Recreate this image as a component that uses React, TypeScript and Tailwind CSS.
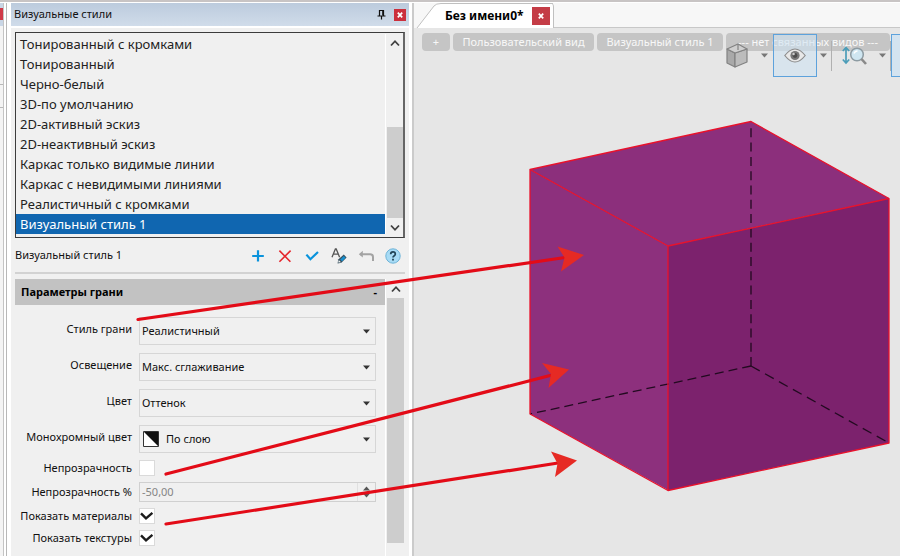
import { useState } from "react"
import type { ReactNode } from "react"

const STYLES = [
  "Тонированный с кромками",
  "Тонированный",
  "Черно-белый",
  "3D-по умолчанию",
  "2D-активный эскиз",
  "2D-неактивный эскиз",
  "Каркас только видимые линии",
  "Каркас с невидимыми линиями",
  "Реалистичный с кромками",
  "Визуальный стиль 1",
]

function Chevron({ down = false }: { down?: boolean }) {
  return (
    <svg width="10" height="8" viewBox="0 0 10 8" fill="none" stroke="#404040" strokeWidth="1.8">
      <path d={down ? "M1 1.5 5 5.8 9 1.5" : "M1 6.5 5 2.2 9 6.5"} />
    </svg>
  )
}

function Caret({ color = "#333" }: { color?: string }) {
  return (
    <svg width="7" height="5" viewBox="0 0 7 5">
      <path d="M0 .5h7L3.5 4.5z" fill={color} />
    </svg>
  )
}

function CloseMark() {
  return (
    <svg width="6" height="6" viewBox="0 0 6 6" stroke="#fff" strokeWidth="1.7">
      <path d="M.8.6 5.2 5.4M5.2.6.8 5.4" />
    </svg>
  )
}

function Row({ id, label, children }: { id: string; label: string; children: ReactNode }) {
  return (
    <div className="flex items-center gap-[7px]">
      <label htmlFor={id} className="w-[117px] shrink-0 text-right leading-4 whitespace-nowrap">
        {label}
      </label>
      {children}
    </div>
  )
}

function SelectRow({ id, label, value, swatch }: { id: string; label: string; value: string; swatch?: boolean }) {
  return (
    <div className="flex gap-[7px]">
      <label htmlFor={id} className="w-[117px] shrink-0 pt-1 text-right leading-4 whitespace-nowrap">
        {label}
      </label>
      <div className="relative flex-1">
        <select
          id={id}
          className={`h-7 w-full appearance-none border border-[#d6d6d6] bg-[#f0f0f0] pr-5 outline-none ${swatch ? "pl-[26px]" : "pl-0.5"}`}
        >
          <option>{value}</option>
        </select>
        {swatch && (
          <svg className="pointer-events-none absolute top-1.5 left-1" width="16" height="16" viewBox="0 0 16 16">
            <path d="M.5.5h15v15H.5z" fill="#fff" stroke="#333" />
            <path d="M1 1h14v14z" fill="#111" />
          </svg>
        )}
        <span className="pointer-events-none absolute inset-y-0 right-1.5 flex items-center">
          <Caret />
        </span>
      </div>
    </div>
  )
}

function CheckRow({ id, label, checked = false }: { id: string; label: string; checked?: boolean }) {
  return (
    <Row id={id} label={label}>
      <span className="relative flex h-4 w-4">
        <input
          id={id}
          type="checkbox"
          defaultChecked={checked}
          className="peer h-4 w-4 appearance-none border border-[#dadada] bg-white"
        />
        <svg
          className="pointer-events-none invisible absolute inset-0 peer-checked:visible"
          width="16"
          height="16"
          viewBox="0 0 16 16"
          fill="none"
          stroke="#1c1c1c"
          strokeWidth="2.4"
        >
          <path d="M2 5.4 7 10.4 13.4 4.8" />
        </svg>
      </span>
    </Row>
  )
}

function StyleList() {
  const [selected, setSelected] = useState(STYLES.length - 1)
  return (
    <div className="flex border border-r-2 border-[#3c3c3c] border-r-[#666] bg-[#f0f0f0] pt-px pb-[3px]">
      <div role="listbox" aria-label="Визуальные стили" className="flex flex-1 flex-col text-[13px]">
        {STYLES.map((name, i) => (
          <button
            key={name}
            role="option"
            aria-selected={i === selected}
            onClick={() => setSelected(i)}
            className={`h-5 pl-1 text-left leading-5 ${i === selected ? "bg-[#1066b0] text-white" : "text-[#222]"}`}
          >
            {name}
          </button>
        ))}
      </div>
      <div className="flex w-[18px] flex-col items-center border-l border-white">
        <button aria-label="Вверх" className="flex h-[18px] w-full items-center justify-center">
          <Chevron />
        </button>
        <div className="flex-1" />
        <div className="h-[91px] w-4 bg-[#cdcdcd]" />
        <button aria-label="Вниз" className="flex h-4 w-full items-end justify-center pb-0.5">
          <Chevron down />
        </button>
      </div>
    </div>
  )
}

function StyleTools() {
  return (
    <div className="flex h-9 items-center justify-between border-b-2 border-[#d2d2d2] pt-px pr-1 text-[11px]">
      <span>Визуальный стиль 1</span>
      <div className="flex items-center gap-[11px]">
        <button aria-label="Добавить">
          <svg width="16" height="16" viewBox="0 0 16 16" stroke="#0a93dc" strokeWidth="2.2">
            <path d="M8 2.2v11.4M2.2 8h11.6" />
          </svg>
        </button>
        <button aria-label="Удалить">
          <svg width="16" height="16" viewBox="0 0 16 16" stroke="#e5262c" strokeWidth="1.6">
            <path d="m2.4 2.6 11 11.2M13.6 2.6 2.4 13.8" />
          </svg>
        </button>
        <button aria-label="Применить">
          <svg width="16" height="16" viewBox="0 0 16 16" fill="none" stroke="#0a93dc" strokeWidth="2.2">
            <path d="m2.4 6.6 4 4.6L14 4" />
          </svg>
        </button>
        <button aria-label="Переименовать">
          <svg width="16" height="16" viewBox="0 0 16 16" fill="none">
            <path d="M1 9.2 4.4 1h.8l3.4 8.2M2.3 6.2h5" stroke="#555" strokeWidth="1.3" />
            <path d="m6.6 15.4.6-3.8 5.6-5 2.8 2.8-5.2 5.4z" fill="#36505f" />
            <path d="m9.2 11.4 3.6-3.4 1.8 1.8-3.5 3.4z" fill="#1590d2" />
            <path d="m7.2 14.6.6-2.6 2.2 2.2z" fill="#f4f4f4" />
          </svg>
        </button>
        <button aria-label="Отменить">
          <svg width="16" height="16" viewBox="0 0 16 16" fill="none" stroke="#a3a3a3" strokeWidth="2">
            <path d="M2 6.2h10.2q2.8 0 2.8 2.8v4" />
            <path d="M4.8 2.8.8 6.2l4 3.2z" fill="#a3a3a3" stroke="none" />
          </svg>
        </button>
        <button aria-label="Справка">
          <svg width="16" height="16" viewBox="0 0 16 16">
            <circle cx="8" cy="8" r="7.2" fill="#a7dbf5" stroke="#6fb4d8" />
            <path d="M5.7 6.3q0-2.4 2.3-2.4t2.3 2.1q0 1.3-1.3 2-1 .6-1 1.6" fill="none" stroke="#224456" strokeWidth="1.7" />
            <path d="M7.1 10.8h1.8v1.8H7.1z" fill="#224456" />
          </svg>
        </button>
      </div>
    </div>
  )
}

function FaceParams() {
  return (
    <div className="flex flex-1">
      <section className="flex-1">
        <h2 className="flex h-[26px] items-center justify-between bg-[#c2c2c2] pr-2 pl-1.5 text-[11px] font-bold text-black">
          Параметры грани
          <button aria-label="Свернуть">-</button>
        </h2>
        <div className="flex flex-col gap-2 pt-3 pr-[9px] text-[11px]">
          <SelectRow id="face-style" label="Стиль грани" value="Реалистичный" />
          <SelectRow id="light" label="Освещение" value="Макс. сглаживание" />
          <SelectRow id="color" label="Цвет" value="Оттенок" />
          <SelectRow id="mono" label="Монохромный цвет" value="По слою" swatch />
        </div>
        <div className="flex flex-col gap-1.5 pt-[7px] pr-[9px] text-[11px]">
          <CheckRow id="opacity" label="Непрозрачность" />
          <Row id="opacity-value" label="Непрозрачность %">
            <div className="flex h-5 flex-1 border border-[#d0d0d0]">
              <input id="opacity-value" defaultValue="-50,00" className="w-full min-w-0 flex-1 bg-transparent pl-0.5 text-[#858585]" />
              <div className="flex w-[18px] flex-col items-center justify-center gap-0.5 border-l border-[#e0e0e0]">
                <button aria-label="Больше">
                  <svg className="block" width="7" height="5" viewBox="0 0 7 5"><path d="M0 4.5h7L3.5.5z" fill="#555" /></svg>
                </button>
                <button aria-label="Меньше">
                  <svg className="block" width="7" height="5" viewBox="0 0 7 5"><path d="M0 .5h7L3.5 4.5z" fill="#555" /></svg>
                </button>
              </div>
            </div>
          </Row>
          <CheckRow id="materials" label="Показать материалы" checked />
          <CheckRow id="textures" label="Показать текстуры" checked />
        </div>
      </section>
      <div className="flex w-5 flex-col items-center border-l border-white pb-[13px]">
        <button aria-label="Вверх" className="flex h-[19px] items-center justify-center">
          <Chevron />
        </button>
        <div className="w-[17px] flex-1 bg-[#cdcdcd]" />
      </div>
    </div>
  )
}

function StylesPanel() {
  return (
    <aside className="flex w-[46%] shrink-0">
      <div className="flex w-[11px] shrink-0">
        <div className="w-1 border-r border-[#c4c4c4] bg-[#f4f4f4]">
          <div className="h-[23px] bg-[#c9d6e6] pt-[5px]">
            <div className="h-3 bg-[#cf3a48]" />
          </div>
          <div className="mt-[58px] h-6 border-y border-[#b8b8b8]" />
        </div>
        <div className="ml-0.5 flex-1 border-l border-[#b8b8b8] bg-white" />
      </div>
      <div className="flex flex-1 flex-col">
        <div className="flex h-[23px] items-center bg-linear-to-b from-[#bccbdd] to-[#d0dcea] pr-[3px] pl-[3px]">
          <h1 className="flex-1 text-[11px]">Визуальные стили</h1>
          <button aria-label="Закрепить" className="mr-2">
            <svg width="9" height="11" viewBox="0 0 9 11" fill="none" stroke="#111">
              <path d="M2.5 6.5v-5h4v5M.5 7h8M4.5 7v3.5" strokeWidth="1.2" />
              <path d="M6 1.5v5" strokeWidth="1.6" />
            </svg>
          </button>
          <button aria-label="Закрыть" className="flex h-3 w-3 items-center justify-center bg-[#cb2f3c]">
            <CloseMark />
          </button>
        </div>
        <div className="flex flex-1 flex-col border-t-2 border-white bg-[#f0f0f0] pt-1 pr-1 pl-1">
          <StyleList />
          <StyleTools />
          <div className="flex flex-1 pt-[5px]">
            <FaceParams />
          </div>
        </div>
      </div>
      <div className="w-[5px] shrink-0 border-r-2 border-[#cbcbcb] bg-white" />
    </aside>
  )
}

function ViewTools() {
  return (
    <div className="absolute top-1.5 right-0 flex h-[43px] items-center">
      <button aria-label="Ориентация" className="mr-[13px]">
        <svg width="22" height="25" viewBox="0 0 22 25" stroke="#828282" strokeWidth="1.2" strokeLinejoin="round">
          <path d="m1 6 8 4v14l-8-4z" fill="#a9a9a9" />
          <path d="m9 10 12-4v13L9 24z" fill="#bcbcbc" />
          <path d="m1 6 11-5 9 5-12 4z" fill="#cfcfcf" />
          <path d="M12 1v6" />
        </svg>
      </button>
      <Caret color="#777" />
      <button
        aria-label="Видимость"
        className="mr-[3px] ml-[5px] flex h-[43px] w-11 items-center justify-center border border-[#5da2dc] bg-[#cfe2f2]/60"
      >
        <svg width="22" height="15" viewBox="0 0 22 15">
          <path d="M.8 7.5Q11-5.5 21.2 7.5 11 20.5.8 7.5z" fill="#e8e8e8" stroke="#8b8b8b" strokeWidth="1.2" />
          <circle cx="11" cy="7.5" r="4.6" fill="#777" />
          <circle cx="11" cy="7.5" r="2.4" fill="#4d4d4d" />
          <circle cx="9.6" cy="6" r="1.2" fill="#ccc" />
        </svg>
      </button>
      <Caret color="#777" />
      <div className="mr-2.5 ml-1 h-[30px] w-px bg-[#b0b0b0]" />
      <button aria-label="Масштаб" className="mr-3">
        <svg width="25" height="20" viewBox="0 0 25 20" fill="none">
          <path d="M4 2v14M.8 5 4 1.5 7.2 5M.8 13.5 4 17l3.2-3.5" stroke="#4c9db8" strokeWidth="1.7" />
          <circle cx="15" cy="8.5" r="6.3" fill="#cfe6f1" stroke="#8d9ba2" strokeWidth="1.5" />
          <path d="M12 7.5q1-2.5 3.5-2.5" stroke="#fff" strokeWidth="1.5" />
          <path d="m19.5 13 4.5 5" stroke="#8a8a8a" strokeWidth="2.6" />
        </svg>
      </button>
      <Caret color="#777" />
      <div className="ml-1 h-[30px] w-px bg-[#b0b0b0]" />
      <div className="h-[43px] w-[9px] border border-r-0 border-[#5da2dc] bg-[#d3e3f0]" />
    </div>
  )
}

function Cube() {
  return (
    <svg className="block w-full" viewBox="414 51 486 505" role="img" aria-label="Куб">
      <path d="m530 169.500 221-48 138 77-221 47.500z" fill="#8c2f7c" />
      <path d="m530 169.500 138 76.500v244L530 414z" fill="#8d307d" />
      <path d="m668 246 221-47.500V443l-221 47.500z" fill="#7c226d" />
      <g stroke="#220a20" strokeWidth="1.3" fill="none">
        <path d="M751 123v243" strokeDasharray="9 5.3" strokeDashoffset="9" />
        <path d="M751 366 530 414" strokeDasharray="9 5" />
        <path d="m751 366 138 77" strokeDasharray="10 6" />
      </g>
      <g stroke="#e8122c" strokeWidth="1.3" fill="none" strokeLinejoin="round">
        <path d="m530 169.500 221-48 138 77V443l-221 47.500L530 414z" />
        <path d="M530 169.500 668 246l221-47.500M668 246v244.500" />
      </g>
    </svg>
  )
}

function Viewport() {
  return (
    <main className="flex min-w-0 flex-1 flex-col bg-[#e6e6e6]">
      <div className="flex h-[25px] items-start border-b border-[#c8c8c8] bg-[#f7f7f7]">
        <div className="flex h-[25px] rounded-tr-sm border-r border-[#c0c0c0] bg-white">
          <svg width="27" height="25" viewBox="0 0 27 25">
            <path d="M0 0h27L22 1 3 25H0z" fill="#f7f7f7" />
            <path d="M3 25 20 3Q22 .5 27 .5" fill="none" stroke="#c0c0c0" />
          </svg>
          <div className="flex items-center gap-2 border-t border-[#c0c0c0] pr-[3px] pl-1">
            <span className="text-[12px] font-bold text-black">Без имени0*</span>
            <button aria-label="Закрыть вкладку" className="flex h-[18px] w-[18px] items-center justify-center bg-[#c43c46]">
              <CloseMark />
            </button>
          </div>
        </div>
      </div>
      <div className="relative">
        <div className="flex gap-[3px] pt-[5px] pl-2 text-[11px] leading-[18px] text-[#f8f8f8]">
          <button className="h-[18px] w-7 rounded-sm bg-[#c5c5c5]">+</button>
          <button className="h-[18px] w-[141px] rounded-sm bg-[#c5c5c5] whitespace-nowrap">Пользовательский вид</button>
          <button className="h-[18px] w-[126px] rounded-sm bg-[#c5c5c5] whitespace-nowrap">Визуальный стиль 1</button>
          <button className="h-[18px] w-[164px] rounded-sm bg-[#c5c5c5] whitespace-nowrap">--- нет связанных видов ---</button>
        </div>
        <ViewTools />
      </div>
      <Cube />
    </main>
  )
}

// Callouts that run from a parameter to the cube face it changes
function Callouts() {
  return (
    <svg
      className="pointer-events-none absolute inset-0 h-full w-full"
      viewBox="0 2 900 554"
      preserveAspectRatio="none"
      aria-hidden="true"
    >
      <g stroke="#e30b17" strokeWidth="3.2" strokeLinecap="round">
        <path d="M138 319.500 565 257.500" />
        <path d="M166 474 552 375" />
        <path d="M166 524 558 463" />
      </g>
      <g fill="#e62a24">
        <path d="m584 255-26.500-8.500 7 11-3.500 14z" />
        <path d="m569 369.500-27-6.500 9 11-2.500 14z" />
        <path d="m577 460.500-26-9 6.500 12-2.500 13.500z" />
      </g>
    </svg>
  )
}

export default function App() {
  return (
    <div className="relative flex min-h-screen flex-col overflow-hidden border-t-2 border-[#c8c4c4] bg-white pt-px font-['Noto_Sans','Open_Sans',sans-serif] text-[#111]">
      <div className="flex flex-1">
        <StylesPanel />
        <Viewport />
      </div>
      <Callouts />
    </div>
  )
}
